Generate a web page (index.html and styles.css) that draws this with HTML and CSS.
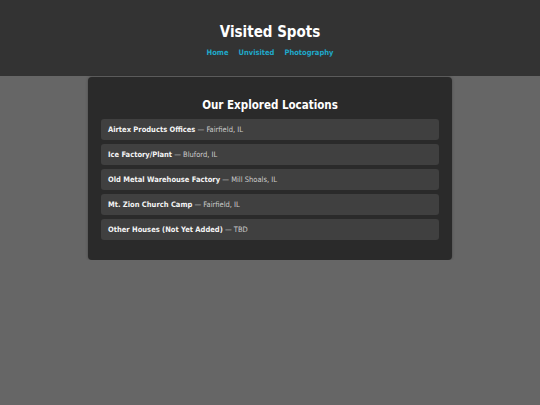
FILE: index.html
```html
<!DOCTYPE html>
<html>
<head>
<meta charset="utf-8">
<link rel="stylesheet" href="styles.css">
</head>
<body>
<header class="site-header">
  <h1 class="site-title">Visited Spots</h1>
  <nav class="nav">
    <a href="#">Home</a>
    <a href="#">Unvisited</a>
    <a href="#">Photography</a>
  </nav>
</header>
<main class="card">
  <h2 class="card-title">Our Explored Locations</h2>
  <ul class="list">
    <li class="item"><strong>Airtex Products Offices</strong> — Fairfield, IL</li>
    <li class="item"><strong>Ice Factory/Plant</strong> — Bluford, IL</li>
    <li class="item"><strong>Old Metal Warehouse Factory</strong> — Mill Shoals, IL</li>
    <li class="item"><strong>Mt. Zion Church Camp</strong> — Fairfield, IL</li>
    <li class="item"><strong>Other Houses (Not Yet Added)</strong> — TBD</li>
  </ul>
</main>
</body>
</html>
```
FILE: styles.css
```css
* { box-sizing: border-box; }
html, body {
  margin: 0;
  padding: 0;
  background: #666666;
  font-family: "DejaVu Sans Condensed", "DejaVu Sans", Verdana, sans-serif;
  font-stretch: condensed;
  color: #f0f0f0;
}
.site-header {
  background: #333333;
  height: 76px;
  padding-top: 22px;
  text-align: center;
}
.site-title {
  margin: 0;
  font-size: 15px;
  font-weight: bold;
  color: #ffffff;
  line-height: 20px;
}
.nav {
  display: flex;
  justify-content: center;
  gap: 10px;
  margin-top: 6px;
}
.nav a {
  color: #1fa8c9;
  font-size: 7.5px;
  font-weight: bold;
  text-decoration: none;
  line-height: 10px;
}
.card {
  width: 364px;
  margin: 1px auto 0;
  background: #2a2a2a;
  border-radius: 4px;
  padding: 20px 13px 20px;
  box-shadow: 0 0 3px rgba(0,0,0,0.3);
}
.card-title {
  margin: 0 0 7px;
  padding-top: 1px;
  text-align: center;
  font-size: 11.5px;
  font-weight: bold;
  color: #ffffff;
  line-height: 14px;
}
.list {
  list-style: none;
  margin: 0;
  padding: 0;
  display: flex;
  flex-direction: column;
  gap: 4px;
}
.item {
  background: #404040;
  border-radius: 3px;
  height: 21px;
  padding: 0 7px;
  display: flex;
  align-items: center;
  font-size: 7.5px;
  color: #cccccc;
  white-space: pre;
}
.item strong {
  color: #f4f4f4;
  font-weight: bold;
}
```
